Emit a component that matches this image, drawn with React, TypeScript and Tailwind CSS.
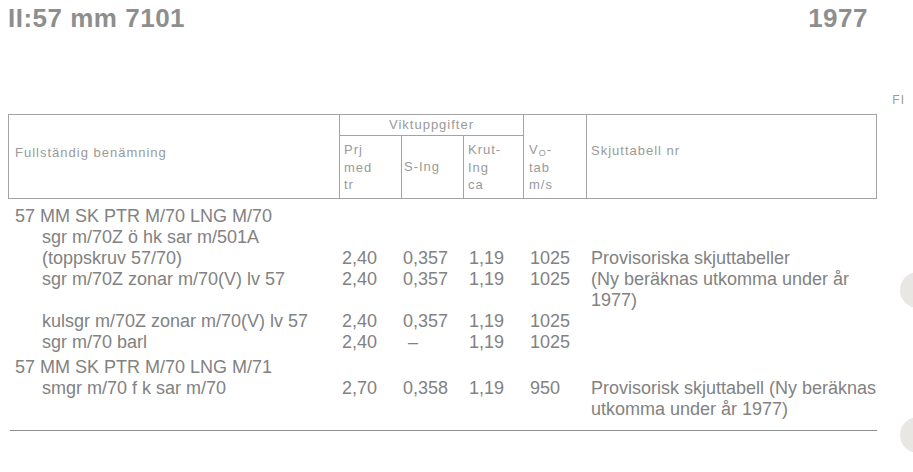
import React from "react";

const cols = "grid grid-cols-[330px_62px_62px_60px_63px_292px]";

type RowProps = {
  name: string;
  sub?: boolean;
  prj?: string;
  sing?: string;
  krut?: string;
  vo?: string;
  note?: React.ReactNode;
  dash?: boolean;
  gap?: boolean;
};

const Row = ({ name, sub, prj, sing, krut, vo, note, dash, gap }: RowProps) => (
  <div className={gap ? cols + " mt-[4px]" : cols}>
    <div className={sub ? "pl-[34px] whitespace-nowrap" : "pl-[7px] whitespace-nowrap"}>{name}</div>
    <div className="pl-[4px]">{prj}</div>
    <div className={dash ? "pl-[8px]" : "pl-[3px]"}>{sing}</div>
    <div className="pl-[7px]">{krut}</div>
    <div className="pl-[8px]">{vo}</div>
    <div className="pl-[6px] whitespace-nowrap">{note}</div>
  </div>
);

export default function App() {
  return (
    <div className="relative w-[913px] h-[472px] overflow-hidden bg-white font-['Liberation_Sans',Arial,sans-serif] text-[#828282]">
      {/* page head */}
      <div className="flex justify-between pl-[8px] pr-[45px] pt-[3px] text-[26px] font-bold leading-[30px] tracking-[0.5px] text-[#8e8e8e]">
        <span>II:57 mm 7101</span>
        <span>1977</span>
      </div>

      <div className="mt-[60px] flex justify-end pr-[8px] text-[12px] leading-[14px] tracking-[1px] text-[#9c9c9c]">
        FI
      </div>

      {/* table head */}
      <div className="mt-[7px] ml-[8px] w-[869px] border border-[#a3a3a3] text-[13px] leading-[17.5px] tracking-[1px] text-[#9a9a9a]">
        <div className="grid grid-cols-[330px_62px_62px_60px_63px_1fr] grid-rows-[21px_62px]">
          <div className="row-span-2 pl-[6px] pt-[29px]">Fullständig benämning</div>
          <div className="col-span-3 flex items-center justify-center border-l border-b border-[#a3a3a3]">
            Viktuppgifter
          </div>
          <div className="row-span-2 border-l border-[#a3a3a3] pl-[5px] pt-[26px]">
            <div>
              V<span className="relative top-[2px] text-[9px] leading-[0]">O</span>-
            </div>
            <div>tab</div>
            <div>m/s</div>
          </div>
          <div className="row-span-2 border-l border-[#a3a3a3] pl-[4px] pt-[27px]">Skjuttabell nr</div>
          <div className="border-l border-[#a3a3a3] pl-[4px] pt-[5px]">
            <div>Prj</div>
            <div>med</div>
            <div>tr</div>
          </div>
          <div className="flex items-center border-l border-[#a3a3a3] pl-[2px]">S-Ing</div>
          <div className="border-l border-[#a3a3a3] pl-[4px] pt-[5px]">
            <div>Krut-</div>
            <div>Ing</div>
            <div>ca</div>
          </div>
        </div>
      </div>

      {/* table body */}
      <div className="ml-[8px] w-[869px] pt-[7px] text-[18px] leading-[21px]">
        <Row name="57 MM SK PTR M/70 LNG M/70" />
        <Row name="sgr m/70Z ö hk sar m/501A" sub />
        <Row
          name="(toppskruv 57/70)"
          sub
          prj="2,40"
          sing="0,357"
          krut="1,19"
          vo="1025"
          note="Provisoriska skjuttabeller"
        />
        <Row
          name="sgr m/70Z zonar m/70(V) lv 57"
          sub
          prj="2,40"
          sing="0,357"
          krut="1,19"
          vo="1025"
          note={
            <>
              (Ny beräknas utkomma under år
              <br />
              1977)
            </>
          }
        />
        <Row
          name="kulsgr m/70Z zonar m/70(V) lv 57"
          sub
          prj="2,40"
          sing="0,357"
          krut="1,19"
          vo="1025"
        />
        <Row name="sgr m/70 barl" sub prj="2,40" sing="–" dash krut="1,19" vo="1025" />
        <Row name="57 MM SK PTR M/70 LNG M/71" gap />
        <Row
          name="smgr m/70 f k sar m/70"
          sub
          prj="2,70"
          sing="0,358"
          krut="1,19"
          vo="950"
          note={
            <>
              Provisorisk skjuttabell (Ny beräknas
              <br />
              utkomma under år 1977)
            </>
          }
        />
      </div>

      <div className="mt-[10px] ml-[10px] w-[867px] border-t border-[#8f8f8f]" />

      {/* binder holes */}
      <div className="absolute left-[900px] top-[272px] h-[36px] w-[36px] rounded-full bg-[#e9e7e4]" />
      <div className="absolute left-[900px] top-[417px] h-[36px] w-[36px] rounded-full bg-[#e9e7e4]" />
    </div>
  );
}
